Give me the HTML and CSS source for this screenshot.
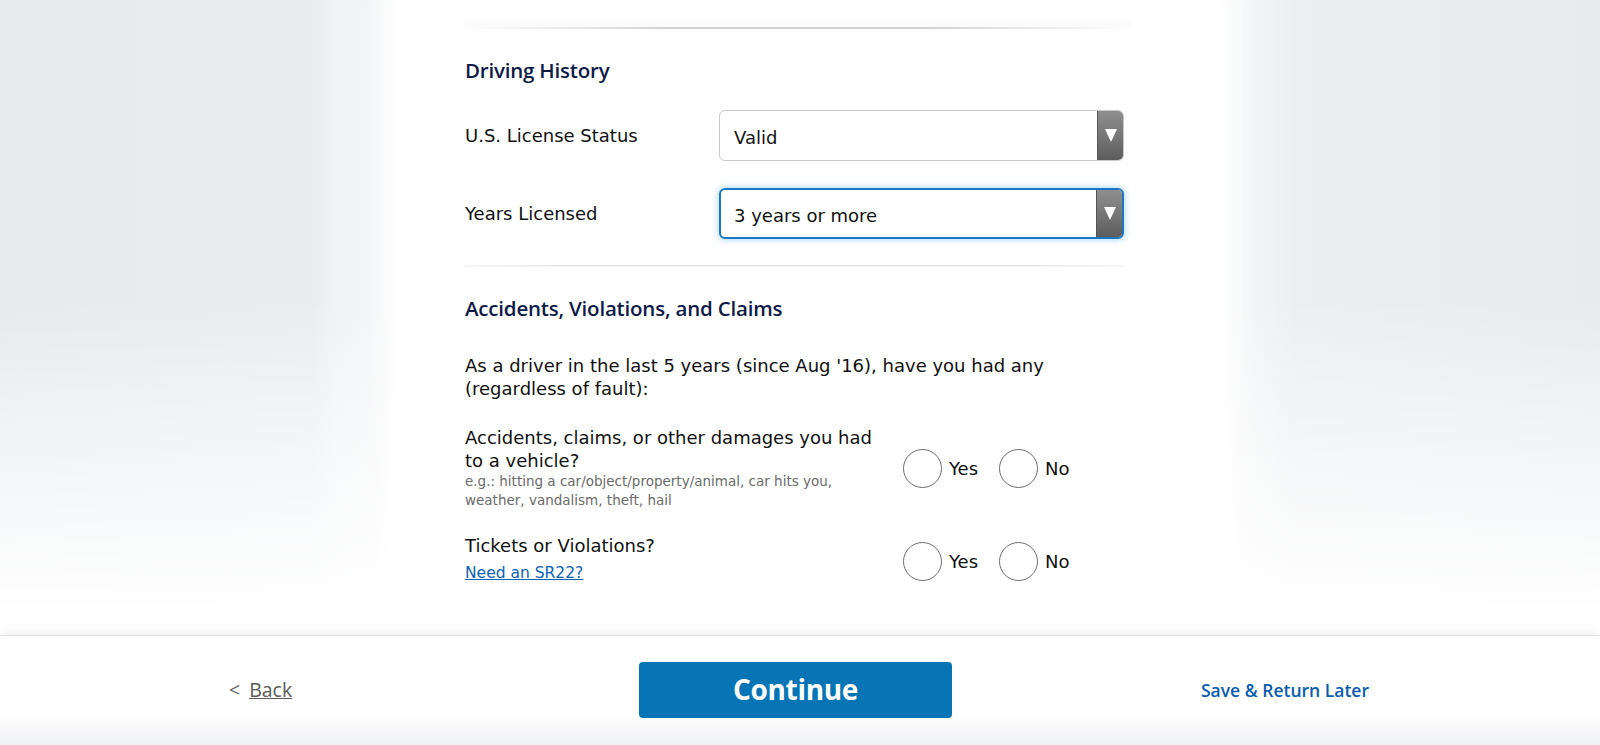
FILE: index.html
```html
<!DOCTYPE html>
<html lang="en">
<head>
<meta charset="utf-8">
<title>Driving History</title>
<link rel="stylesheet" href="styles.css">
</head>
<body>
<div class="page">
  <main class="card">
    <div class="content">
      <div class="top-rule"></div>
      <h2 class="section-title">Driving History</h2>

      <div class="field-row">
        <label class="field-label">U.S. License Status</label>
        <div class="select">
          <span class="select-value">Valid</span>
          <span class="select-btn"><svg width="12" height="13" viewBox="0 0 12 13"><polygon points="0,0 12,0 6,13" fill="#fff"/></svg></span>
        </div>
      </div>

      <div class="field-row">
        <label class="field-label">Years Licensed</label>
        <div class="select select-focus">
          <span class="select-value">3 years or more</span>
          <span class="select-btn"><svg width="12" height="13" viewBox="0 0 12 13"><polygon points="0,0 12,0 6,13" fill="#fff"/></svg></span>
        </div>
      </div>

      <div class="mid-rule"></div>

      <h2 class="section-title section-title-2">Accidents, Violations, and Claims</h2>

      <p class="intro">As a driver in the last 5 years (since Aug '16), have you had any (regardless of fault):</p>

      <div class="question">
        <div class="q-text">
          <div class="q-main">Accidents, claims, or other damages you had to a vehicle?</div>
          <div class="q-sub">e.g.: hitting a car/object/property/animal, car hits you, weather, vandalism, theft, hail</div>
        </div>
        <div class="radios">
          <span class="radio"><span class="circle"></span><span class="r-label">Yes</span></span>
          <span class="radio"><span class="circle"></span><span class="r-label">No</span></span>
        </div>
      </div>

      <div class="question question-2">
        <div class="q-text">
          <div class="q-main">Tickets or Violations?</div>
          <a class="q-link" href="#">Need an SR22?</a>
        </div>
        <div class="radios radios-2">
          <span class="radio"><span class="circle"></span><span class="r-label">Yes</span></span>
          <span class="radio"><span class="circle"></span><span class="r-label">No</span></span>
        </div>
      </div>
    </div>
  </main>

  <footer class="footer">
    <a class="back" href="#"><span class="lt">&lt;</span><span class="back-text">Back</span></a>
    <button class="continue" type="button">Continue</button>
    <a class="save" href="#">Save &amp; Return Later</a>
  </footer>
</div>
</body>
</html>
```

FILE: styles.css
```css
* { box-sizing: border-box; }

html, body {
  margin: 0;
  padding: 0;
}

body {
  width: 1600px;
  height: 745px;
  overflow: hidden;
  font-family: "DejaVu Sans", Verdana, sans-serif;
  color: #111;
  background:
    linear-gradient(to bottom, rgba(255,255,255,0) 0%, rgba(255,255,255,0) 40%, rgba(255,255,255,1) 82%),
    linear-gradient(to right, #e7eaed 0%, #eaedf0 19.5%, #f1f3f5 21%, #f5f6f7 24%, #ffffff 25.5%, #ffffff 75.5%, #f6f7f8 77.5%, #eceef0 81%, #e8ebee 100%);
}

.page {
  display: flex;
  flex-direction: column;
  height: 745px;
}

.card {
  width: 824px;
  height: 635px;
  flex: none;
  margin-left: 396px;
  background: #fff;
  box-shadow: 0 0 24px 14px rgba(255,255,255,0.8);
}

.content {
  width: 659px;
  margin-left: 69px;
  padding-top: 27px;
}

.top-rule {
  height: 2px;
  margin-left: -1px;
  width: 669px;
  background: linear-gradient(to right, rgba(200,200,200,0) 0%, rgba(205,206,209,0.9) 30%, rgba(205,206,209,0.9) 70%, rgba(200,200,200,0) 100%);
  box-shadow: 0 -4px 6px rgba(180,182,186,0.22);
}

.section-title {
  margin: 28px 0 0 0;
  font-family: "Open Sans", "Noto Sans", sans-serif;
  font-weight: 600;
  font-size: 20.5px;
  line-height: 26px;
  color: #0e1b47;
  letter-spacing: -0.2px;
}

.field-row {
  display: flex;
  align-items: center;
  margin-top: 27px;
}
.field-row + .field-row { margin-top: 27px; }

.field-label {
  width: 254px;
  font-size: 18px;
  line-height: 23px;
}

.select {
  width: 405px;
  height: 51px;
  border: 1px solid #c9c9c9;
  border-radius: 6px;
  display: flex;
  align-items: center;
  justify-content: space-between;
  background: #fff;
  overflow: hidden;
}

.select-value {
  padding-left: 14px;
  font-size: 18px;
  padding-top: 3px;
}

.select-btn {
  width: 26px;
  height: 100%;
  display: flex;
  justify-content: center;
  padding-top: 18px;
  background: linear-gradient(to bottom, #8e8e8e 0%, #777 50%, #5c5c5c 100%);
  border-left: 1px solid #555;
}

.select-focus {
  border: 2px solid #1b78c0;
  box-shadow: 0 0 6px 1px rgba(110,185,235,0.55);
}
.select-focus .select-value { padding-left: 13px; padding-top: 4px; }
.select-focus .select-btn { padding-top: 17px; }

.mid-rule {
  height: 1px;
  margin-top: 26px;
  background: linear-gradient(to right, rgba(220,220,222,0.2) 0%, #e2e3e5 15%, #e2e3e5 85%, rgba(220,220,222,0.2) 100%);
  box-shadow: 0 1px 1px rgba(230,230,232,0.6);
}

.section-title-2 { margin-top: 29px; }

.intro {
  margin: 33px 0 0 0;
  font-size: 18px;
  line-height: 23px;
  width: 640px;
}

.question {
  display: flex;
  align-items: center;
  margin-top: 26px;
}
.question-2 { margin-top: 24px; }

.q-text { width: 438px; }

.q-main {
  font-size: 18px;
  line-height: 23px;
  width: 420px;
}

.q-sub {
  font-size: 13.5px;
  line-height: 19px;
  color: #6b6b6b;
  margin-top: 0;
  width: 420px;
}

.q-link {
  display: block;
  margin-top: 6px;
  font-size: 15.5px;
  line-height: 20px;
  color: #0b62b4;
  text-decoration: underline;
}

.radios {
  display: flex;
  align-items: center;
  gap: 21px;
}
.radios-2 { margin-top: 6px; }

.radio {
  display: flex;
  align-items: center;
  gap: 7px;
}

.circle {
  width: 39px;
  height: 39px;
  border-radius: 50%;
  border: 1px solid #6f6f6f;
  background: #fff;
}

.r-label {
  font-size: 18px;
  line-height: 23px;
}

.footer {
  height: 110px;
  flex: none;
  display: flex;
  align-items: flex-start;
  padding-top: 26px;
  background:
    linear-gradient(to bottom, #ffffff 0%, #ffffff 72%, rgba(240,241,243,1) 100%);
  border-top: 1px solid #dfe1e4;
  box-shadow: 0 -5px 8px -3px rgba(190,192,196,0.25);
}

.back {
  margin-left: 229px;
  margin-top: 15px;
  font-family: "Open Sans", "Noto Sans", sans-serif;
  font-size: 19.5px;
  line-height: 26px;
  color: #5a5a5a;
  text-decoration: none;
  width: 410px;
}
.back-text { text-decoration: underline; margin-left: 9px; }
.lt { color: #666; }

.continue {
  width: 313px;
  height: 56px;
  border: none;
  border-radius: 4px;
  background: #0774b5;
  color: #fff;
  font-family: "Open Sans", "Noto Sans", sans-serif;
  font-weight: 700;
  font-size: 28px;
  letter-spacing: -0.3px;
  padding: 0 0 3px 0;
}

.save {
  margin-left: 249px;
  margin-top: 17px;
  font-family: "Open Sans", "Noto Sans", sans-serif;
  font-weight: 600;
  font-size: 17.5px;
  line-height: 22px;
  color: #0a5cae;
  text-decoration: none;
}
```
